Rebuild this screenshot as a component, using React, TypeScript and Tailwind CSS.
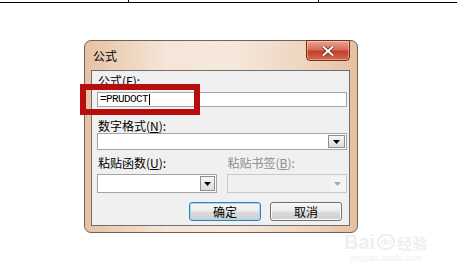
import React from 'react'

const cjk = { fontFamily: '"Noto Sans CJK SC", "Liberation Sans", sans-serif' }

function Arrow({ disabled }: { disabled?: boolean }) {
  return (
    <svg width="7" height="4" viewBox="0 0 7 4">
      <path d="M0 0H7L3.5 4Z" fill={disabled ? '#a8a8a8' : '#000'} />
    </svg>
  )
}

function DropButton({ w, disabled }: { w: string; disabled?: boolean }) {
  return (
    <div
      className={`${w} h-full flex items-center justify-center border ${
        disabled ? 'border-transparent bg-[#f4f4f4]' : 'border-[#8e8f8f] bg-[linear-gradient(#f6f6f6,#dcdcdc)]'
      }`}
    >
      <Arrow disabled={disabled} />
    </div>
  )
}

function Label({ children, disabled }: { children: React.ReactNode; disabled?: boolean }) {
  return (
    <div className={`h-[14px] ml-[1px] text-[12px] leading-[14px] ${disabled ? 'text-[#8d8d8d]' : 'text-black'}`} style={cjk}>
      {children}
    </div>
  )
}

function Button({ label, focused }: { label: string; focused?: boolean }) {
  return (
    <button
      className={`w-[72px] h-[19px] rounded-[3px] border text-[12px] leading-none text-black bg-[linear-gradient(#f7f7f7_0%,#ececec_48%,#dbdbdb_52%,#d0d0d0_100%)] ${
        focused ? 'border-[#3c7fb1] shadow-[inset_0_0_0_1px_#9fd6f5]' : 'border-[#707070] shadow-[inset_0_0_0_1px_#fbfbfb]'
      }`}
      style={cjk}
    >
      {label}
    </button>
  )
}

export default function App() {
  return (
    <div className="relative w-[457px] h-[274px] overflow-hidden bg-white">
      {/* table lines from the document behind */}
      <div className="flex h-[3px] border-b border-black">
        <div className="w-[129px] border-r border-black" />
        <div className="w-[190px] border-r border-black" />
      </div>

      <div className="ml-[84px] mt-[37px] w-[274px] h-[193px] rounded-[7px] border border-[#6f6258] px-[6px] pb-[6px] flex flex-col bg-[linear-gradient(90deg,#e6c2a2,#f5e6d9_30%,#f6e8dc_55%,#ecd2bb_85%,#e5c09f)]">
        <div className="h-[29px] flex justify-between">
          <div className="ml-[2px] self-center text-[12px] leading-[14px] text-black" style={cjk}>
            公式
          </div>
          <div className="mr-[1px] -mt-[1px] w-[44px] h-[21px] rounded-b-[4px] border border-[#7e2c1c] bg-[linear-gradient(#e9a594_0%,#d66e56_45%,#c3412a_55%,#cf6a50_100%)] flex items-center justify-center shadow-[inset_0_0_0_1px_rgba(255,255,255,0.35)]">
            <svg width="12" height="10" viewBox="0 0 12 10">
              <path d="M1.5 1L10.5 9M10.5 1L1.5 9" stroke="#5a2a20" strokeWidth="3.4" strokeLinecap="square" />
              <path d="M1.5 1L10.5 9M10.5 1L1.5 9" stroke="#fff" strokeWidth="2" strokeLinecap="square" />
            </svg>
          </div>
        </div>

        <div className="w-[259px] h-[156px] border border-[#6e6e6e] bg-[#f0f0f0] pl-[5px] pr-[2px] pt-[3px] flex flex-col">
          <Label>
            公式(<u>F</u>):
          </Label>
          <div
            className="mt-[4px] w-[250px] h-[15px] border border-[#a5a5a5] bg-white pl-[2px] flex items-center text-[11px] tracking-[-0.6px] text-black"
            style={{ fontFamily: '"Liberation Mono", monospace' }}
          >
            =PRUDOCT<span className="ml-[1px] w-px h-[11px] bg-black" />
          </div>

          <div className="mt-[12px]">
            <Label>
              数字格式(<u>N</u>):
            </Label>
          </div>
          <div className="w-[250px] h-[17px] border border-[#a5a5a5] bg-white flex justify-end p-px">
            <DropButton w="w-[17px]" />
          </div>

          <div className="mt-[6px] flex gap-[10px]">
            <div className="w-[120px]">
              <Label>
                粘贴函数(<u>U</u>):
              </Label>
              <div className="mt-[4px] h-[19px] border border-[#a5a5a5] bg-white flex justify-end p-px">
                <DropButton w="w-[15px]" />
              </div>
            </div>
            <div className="w-[121px]">
              <Label disabled>
                粘贴书签(<u>B</u>):
              </Label>
              <div className="mt-[4px] h-[19px] border border-[#c9c9c9] bg-[#f0f0f0] flex justify-end p-px">
                <DropButton w="w-[15px]" disabled />
              </div>
            </div>
          </div>

          <div className="mt-[9px] mr-[5px] flex justify-end gap-[9px]">
            <Button label="确定" focused />
            <Button label="取消" />
          </div>
        </div>
      </div>

      {/* annotation box */}
      <div className="absolute left-[80px] top-[84px] w-[120px] h-[31px] border-[6px] border-[#b80d0d]" />

      {/* watermark */}
      <div className="absolute left-[344px] top-[232px] flex flex-col items-start text-[#efefef]">
        <div className="flex items-center gap-[2px] leading-none">
          <span className="text-[20px] font-bold" style={{ fontFamily: '"Liberation Sans", sans-serif' }}>
            Bai
          </span>
          <span className="w-[18px] h-[16px] rounded-full border-2 border-[#efefef] text-[9px] font-bold flex items-center justify-center" style={{ fontFamily: '"Liberation Sans", sans-serif' }}>
            du
          </span>
          <span className="text-[15px] font-bold" style={cjk}>
            经验
          </span>
        </div>
        <div className="ml-[6px] mt-[2px] text-[9px] leading-none text-[#f0f0f0]" style={{ fontFamily: '"Liberation Sans", sans-serif' }}>
          jingyan.baidu.com
        </div>
      </div>
    </div>
  )
}
